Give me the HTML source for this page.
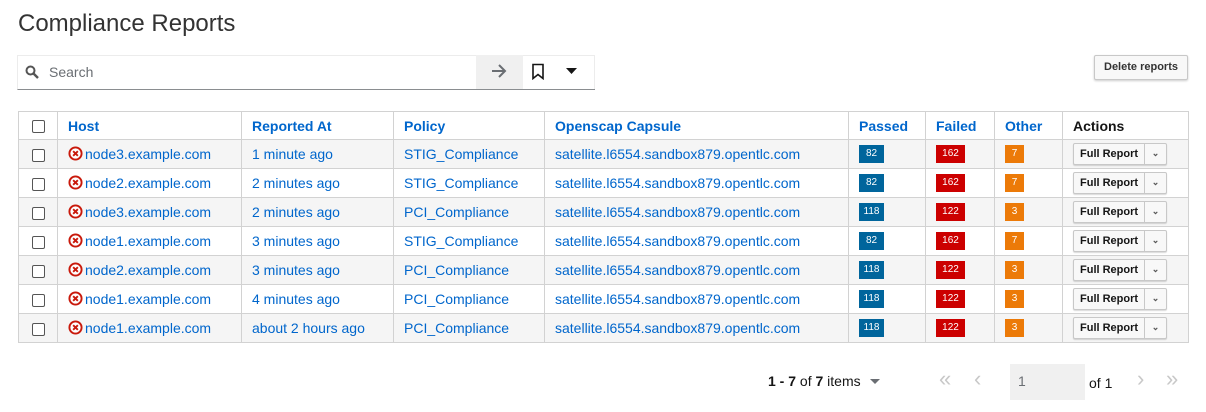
<!DOCTYPE html>
<html><head><meta charset="utf-8"><style>
*{box-sizing:border-box}
body{margin:0;width:1206px;height:412px;background:#fff;font-family:"Liberation Sans",sans-serif;color:#151515;position:relative;overflow:hidden}
.abs{position:absolute}
h1{position:absolute;left:18px;top:10px;margin:0;font-weight:400;font-size:24px;color:#333}
.search{left:17px;top:55px;width:578px;height:35px;border:1px solid #ececec;border-bottom:1px solid #8a8d90}
.arrow{left:476px;top:55px;width:47px;height:34px;background:#f0f0f0}
table{position:absolute;left:18px;top:111px;border-collapse:collapse;font-size:14px}
td,th{border:1px solid #d2d2d2;height:29px;padding:0 0 0 10px;text-align:left;white-space:nowrap}
th{font-weight:700;color:#0066cc;font-size:14px;height:28px}
td{color:#0066cc;height:29px}
tr.g td{background:#f5f5f5}
.cb{width:13px;height:13px;border:1px solid #555;border-radius:2px;display:inline-block;vertical-align:middle;background:#fff}
.b{display:inline-block;color:#fff;font-size:10px;height:18px;line-height:18px;text-align:center;vertical-align:middle}
.p{background:#00659c;width:25px}
.f{background:#cc0000;width:29px}
.o{background:#ec7a08;width:19px}
.btn{display:inline-flex;vertical-align:middle;border:1px solid #c8c8c8;border-radius:2px;height:22px;font-size:11px;font-weight:700;color:#151515;box-shadow:0 1px 1px rgba(0,0,0,.15);background:#f8f8f8}
.btn span{padding:0 6px;line-height:20px}
.btn i{border-left:1px solid #c8c8c8;width:22px;font-style:normal;text-align:center;font-size:9px;line-height:18px;color:#555}
.x{display:inline-block;width:15px;height:15px;vertical-align:-2px;margin-right:2px}
.pg{font-size:22px;color:#c8c8c8;top:366px}
</style></head><body>
<h1>Compliance Reports</h1>
<div class="abs search"></div>
<svg class="abs" style="left:25px;top:65px" width="14" height="14" viewBox="0 0 14 14"><circle cx="5.5" cy="5.5" r="4" fill="none" stroke="#555" stroke-width="2"/><path d="M8.5 8.5L13 13" stroke="#555" stroke-width="2.4"/></svg>
<div class="abs" style="left:49px;top:64px;font-size:14px;color:#6a6e73">Search</div>
<div class="abs arrow"></div>
<svg class="abs" style="left:491px;top:64px" width="16" height="14" viewBox="0 0 16 14"><path d="M1 7H14M8 1l6 6-6 6" fill="none" stroke="#6a6e73" stroke-width="2"/></svg>
<div class="abs" style="left:523px;top:89px;width:72px;height:1px;background:#8a8d90"></div>
<svg class="abs" style="left:531px;top:63px" width="14" height="17" viewBox="0 0 14 17"><path d="M2 1.5H12V15.5L7 11.5L2 15.5Z" fill="none" stroke="#151515" stroke-width="1.6"/></svg>
<svg class="abs" style="left:566px;top:68px" width="11" height="6"><path d="M0 0H11L5.5 6Z" fill="#151515"/></svg>
<div class="abs" style="left:1094px;top:55px;width:94px;height:25px;border:1px solid #c8c8c8;border-radius:2px;box-shadow:0 1px 2px rgba(0,0,0,.2);font-size:11px;font-weight:700;line-height:23px;text-align:center;color:#333;background:#f8f8f8">Delete reports</div>
<svg width="0" height="0" style="position:absolute"><defs><symbol id="x" viewBox="0 0 16 16"><circle cx="8" cy="8" r="6.5" fill="#fff" stroke="#c9190b" stroke-width="2"/><path d="M5.5 5.5L10.5 10.5M10.5 5.5L5.5 10.5" stroke="#c9190b" stroke-width="2"/></symbol></defs></svg>
<table>
<tr><th style="width:39px;padding-left:13px"><span class="cb"></span></th><th style="width:184px">Host</th><th style="width:152px">Reported At</th><th style="width:151px">Policy</th><th style="width:304px">Openscap Capsule</th><th style="width:77px">Passed</th><th style="width:69px">Failed</th><th style="width:68px">Other</th><th style="width:126px;color:#151515">Actions</th></tr>
<tr class="g"><td style="padding-left:13px"><span class="cb"></span></td><td><svg class="x"><use href="#x"/></svg>node3.example.com</td><td>1 minute ago</td><td>STIG_Compliance</td><td>satellite.l6554.sandbox879.opentlc.com</td><td><span class="b p">82</span></td><td><span class="b f">162</span></td><td><span class="b o">7</span></td><td><span class="btn"><span>Full Report</span><i>⌄</i></span></td></tr>
<tr><td style="padding-left:13px"><span class="cb"></span></td><td><svg class="x"><use href="#x"/></svg>node2.example.com</td><td>2 minutes ago</td><td>STIG_Compliance</td><td>satellite.l6554.sandbox879.opentlc.com</td><td><span class="b p">82</span></td><td><span class="b f">162</span></td><td><span class="b o">7</span></td><td><span class="btn"><span>Full Report</span><i>⌄</i></span></td></tr>
<tr class="g"><td style="padding-left:13px"><span class="cb"></span></td><td><svg class="x"><use href="#x"/></svg>node3.example.com</td><td>2 minutes ago</td><td>PCI_Compliance</td><td>satellite.l6554.sandbox879.opentlc.com</td><td><span class="b p">118</span></td><td><span class="b f">122</span></td><td><span class="b o">3</span></td><td><span class="btn"><span>Full Report</span><i>⌄</i></span></td></tr>
<tr><td style="padding-left:13px"><span class="cb"></span></td><td><svg class="x"><use href="#x"/></svg>node1.example.com</td><td>3 minutes ago</td><td>STIG_Compliance</td><td>satellite.l6554.sandbox879.opentlc.com</td><td><span class="b p">82</span></td><td><span class="b f">162</span></td><td><span class="b o">7</span></td><td><span class="btn"><span>Full Report</span><i>⌄</i></span></td></tr>
<tr class="g"><td style="padding-left:13px"><span class="cb"></span></td><td><svg class="x"><use href="#x"/></svg>node2.example.com</td><td>3 minutes ago</td><td>PCI_Compliance</td><td>satellite.l6554.sandbox879.opentlc.com</td><td><span class="b p">118</span></td><td><span class="b f">122</span></td><td><span class="b o">3</span></td><td><span class="btn"><span>Full Report</span><i>⌄</i></span></td></tr>
<tr><td style="padding-left:13px"><span class="cb"></span></td><td><svg class="x"><use href="#x"/></svg>node1.example.com</td><td>4 minutes ago</td><td>PCI_Compliance</td><td>satellite.l6554.sandbox879.opentlc.com</td><td><span class="b p">118</span></td><td><span class="b f">122</span></td><td><span class="b o">3</span></td><td><span class="btn"><span>Full Report</span><i>⌄</i></span></td></tr>
<tr class="g"><td style="padding-left:13px"><span class="cb"></span></td><td><svg class="x"><use href="#x"/></svg>node1.example.com</td><td>about 2 hours ago</td><td>PCI_Compliance</td><td>satellite.l6554.sandbox879.opentlc.com</td><td><span class="b p">118</span></td><td><span class="b f">122</span></td><td><span class="b o">3</span></td><td><span class="btn"><span>Full Report</span><i>⌄</i></span></td></tr>
</table>
<div class="abs" style="left:768px;top:373px;font-size:14px;color:#151515"><b>1 - 7</b> of <b>7</b> items</div>
<svg class="abs" style="left:870px;top:379px" width="10" height="5"><path d="M0 0H10L5 5Z" fill="#6a6e73"/></svg>
<div class="abs pg" style="left:939px;letter-spacing:-3px">«</div>
<div class="abs pg" style="left:974px">‹</div>
<div class="abs" style="left:1010px;top:364px;width:75px;height:36px;background:#f0f0f0;font-size:14px;color:#6a6e73;padding:9px 0 0 8px">1</div>
<div class="abs" style="left:1089px;top:375px;font-size:14px;color:#151515">of 1</div>
<div class="abs pg" style="left:1137px">›</div>
<div class="abs pg" style="left:1166px;letter-spacing:-3px">»</div>
</body></html>
